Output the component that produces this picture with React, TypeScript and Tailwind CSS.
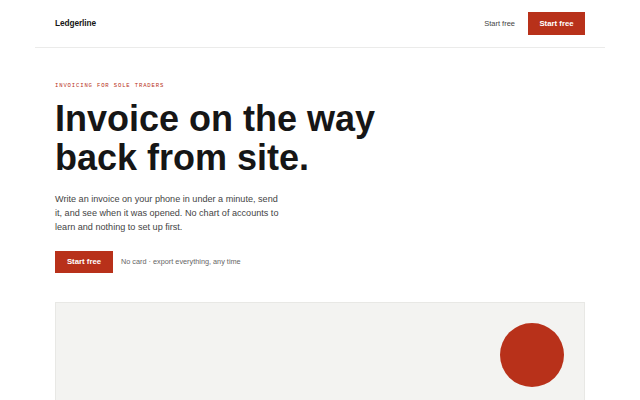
export default function App() {
	return (
		<div className="h-[400px] overflow-hidden bg-white font-['Liberation_Sans',Arial,sans-serif] text-[#161616]">
			<div className="mx-auto w-[570px]">
				{/* Header */}
				<header className="flex h-[48px] items-center justify-between border-b border-[#ebebea] px-5">
					<span className="text-[8.3px] font-bold tracking-[-0.1px]">Ledgerline</span>
					<nav className="flex items-center gap-[13px]">
						<a className="text-[7.5px] text-[#444]">Start free</a>
						<button className="h-[23px] w-[57px] bg-[#b8311a] text-[7.8px] font-bold text-white">
							Start free
						</button>
					</nav>
				</header>

				{/* Hero */}
				<main className="px-5 pt-[34px]">
					<p className="font-['Liberation_Mono',monospace] text-[5.6px] leading-[8px] tracking-[0.15em] text-[#b8311a]">
						INVOICING FOR SOLE TRADERS
					</p>
					<h1 className="mt-[10px] text-[36px] font-bold leading-[38.5px]">
						Invoice on the way
						<br />
						back from site.
					</h1>
					<p className="mt-[15px] w-[228px] text-[9.1px] leading-[14px] text-[#444]">
						Write an invoice on your phone in under a minute, send it, and see when it was opened. No chart of accounts to learn and nothing to set up first.
					</p>
					<div className="mt-[17px] flex items-center gap-[8px]">
						<button className="h-[22px] w-[58px] bg-[#b8311a] text-[7.8px] font-bold text-white">
							Start free
						</button>
						<span className="text-[7.3px] text-[#666]">No card · export everything, any time</span>
					</div>

					{/* Preview panel */}
					<div className="mt-[29px] flex h-[100px] justify-end border-x border-t border-[#e8e8e5] bg-[#f3f3f1] pr-[20px] pt-[20px]">
						<div className="h-[64px] w-[64px] rounded-full bg-[#b8311a]" />
					</div>
				</main>
			</div>
		</div>
	);
}
